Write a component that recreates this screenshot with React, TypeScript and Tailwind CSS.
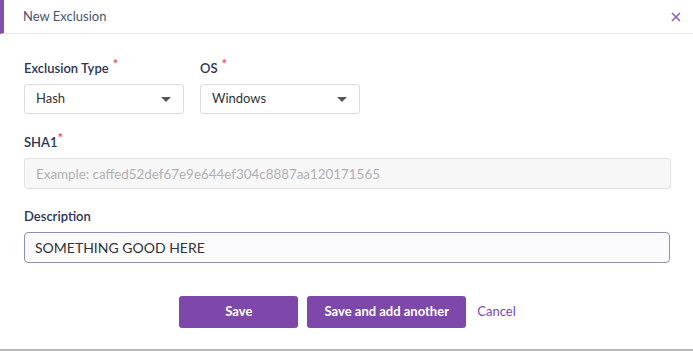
const font = { fontFamily: "Lato, 'Open Sans', sans-serif" };

function Label({ text }: { text: string }) {
  return (
    <label className="flex h-4 items-start text-[13px] font-semibold leading-4 text-[#2b3553]">
      {text}
      <span className="ml-1 -mt-1 text-[13px] text-[#e5484d]">*</span>
    </label>
  );
}

function Select({ value }: { value: string }) {
  return (
    <div className="flex h-[30px] w-[160px] items-center justify-between rounded-[3px] border border-[#dcdcdc] bg-white pl-[11px] pr-[12px] text-[13px] text-[#333]">
      <span>{value}</span>
      <svg width="10" height="5" viewBox="0 0 10 5">
        <path d="M0 0h10L5 5z" fill="#555" />
      </svg>
    </div>
  );
}

export default function App() {
  return (
    <div className="flex h-[351px] w-[693px] flex-col bg-white" style={font}>
      <div className="flex h-[34px] items-center justify-between border-b border-[#e6e6e9] border-l-4 border-l-[#7c4fb0] pl-[19px] pr-[12px]">
        <span className="text-[13px] text-[#4a5470]">New Exclusion</span>
        <svg width="10" height="10" viewBox="0 0 10 10">
          <path d="M1 1l8 8M9 1l-8 8" stroke="#8a5fbf" strokeWidth="1.6" />
        </svg>
      </div>

      <div className="flex flex-1 flex-col pl-[24px] pr-[23px] pt-[26px]">
        <div className="flex gap-4">
          <div className="flex flex-col gap-2">
            <Label text="Exclusion Type" />
            <Select value="Hash" />
          </div>
          <div className="flex flex-col gap-2">
            <Label text="OS" />
            <Select value="Windows" />
          </div>
        </div>

        <div className="mt-5 flex flex-col gap-2">
          <label className="flex h-4 items-start text-[13px] font-semibold leading-4 text-[#2b3553]">
            SHA1
            <span className="-mt-1 text-[13px] text-[#e5484d]">*</span>
          </label>
          <input
            disabled
            placeholder="Example: caffed52def67e9e644ef304c8887aa120171565"
            className="h-[31px] w-[647px] rounded-[3px] border border-[#e2e2e4] bg-[#f7f7f7] px-[11px] text-[13.4px] placeholder:text-[#b0b0b4] outline-none"
          />
        </div>

        <div className="mt-[19px] flex flex-col gap-2">
          <label className="h-4 text-[13px] font-semibold leading-4 text-[#2b3553]">Description</label>
          <input
            defaultValue="SOMETHING GOOD HERE"
            className="h-[31px] w-[646px] rounded-[4px] border border-[#8f90ad] bg-[#fafafc] px-[10px] text-[14px] text-[#333] outline-none"
          />
        </div>

        <div className="mt-[33px] flex items-center justify-center gap-[9px] pl-[1px]">
          <button className="h-[32px] w-[119px] rounded-[3px] bg-[#7d48aa] text-[13px] font-bold text-white">Save</button>
          <button className="h-[32px] w-[159px] rounded-[3px] bg-[#7d48aa] text-[13px] font-bold text-white">Save and add another</button>
          <button className="ml-[2px] text-[13px] text-[#7d48aa]">Cancel</button>
        </div>
      </div>
      <div className="h-[2px] bg-[#b8b8b8]" />
    </div>
  );
}
